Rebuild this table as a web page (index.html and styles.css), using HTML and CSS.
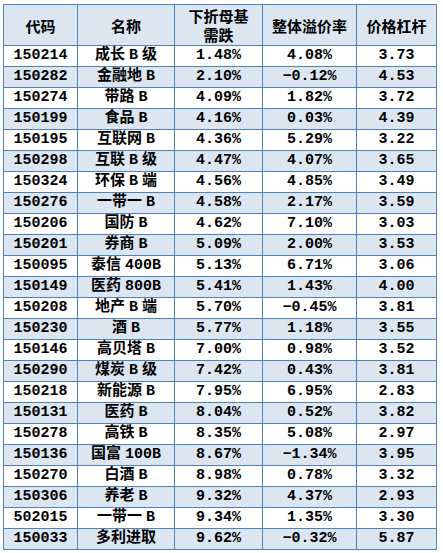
FILE: index.html
```html
<!DOCTYPE html>
<html lang="zh">
<head>
<meta charset="utf-8">
<title>分级B下折母基需跌幅度</title>
<link rel="stylesheet" href="styles.css">
</head>
<body>
<table class="grid">
  <colgroup>
    <col class="c-code"><col class="c-name"><col class="c-drop"><col class="c-prem"><col class="c-lev">
  </colgroup>
  <thead>
    <tr class="head">
      <th>代码</th>
      <th>名称</th>
      <th>下折母基<br>需跌</th>
      <th>整体溢价率</th>
      <th>价格杠杆</th>
    </tr>
  </thead>
  <tbody>
    <tr><td>150214</td><td>成长<span class="lat mid">B</span>级</td><td>1.48%</td><td>4.08%</td><td>3.73</td></tr>
    <tr><td>150282</td><td>金融地<span class="lat">B</span></td><td>2.10%</td><td>−0.12%</td><td>4.53</td></tr>
    <tr><td>150274</td><td>带路<span class="lat">B</span></td><td>4.09%</td><td>1.82%</td><td>3.72</td></tr>
    <tr><td>150199</td><td>食品<span class="lat">B</span></td><td>4.16%</td><td>0.03%</td><td>4.39</td></tr>
    <tr><td>150195</td><td>互联网<span class="lat">B</span></td><td>4.36%</td><td>5.29%</td><td>3.22</td></tr>
    <tr><td>150298</td><td>互联<span class="lat mid">B</span>级</td><td>4.47%</td><td>4.07%</td><td>3.65</td></tr>
    <tr><td>150324</td><td>环保<span class="lat mid">B</span>端</td><td>4.56%</td><td>4.85%</td><td>3.49</td></tr>
    <tr><td>150276</td><td>一带一<span class="lat">B</span></td><td>4.58%</td><td>2.17%</td><td>3.59</td></tr>
    <tr><td>150206</td><td>国防<span class="lat">B</span></td><td>4.62%</td><td>7.10%</td><td>3.03</td></tr>
    <tr><td>150201</td><td>券商<span class="lat">B</span></td><td>5.09%</td><td>2.00%</td><td>3.53</td></tr>
    <tr><td>150095</td><td>泰信<span class="lat">400B</span></td><td>5.13%</td><td>6.71%</td><td>3.06</td></tr>
    <tr><td>150149</td><td>医药<span class="lat">800B</span></td><td>5.41%</td><td>1.43%</td><td>4.00</td></tr>
    <tr><td>150208</td><td>地产<span class="lat mid">B</span>端</td><td>5.70%</td><td>−0.45%</td><td>3.81</td></tr>
    <tr><td>150230</td><td>酒<span class="lat">B</span></td><td>5.77%</td><td>1.18%</td><td>3.55</td></tr>
    <tr><td>150146</td><td>高贝塔<span class="lat">B</span></td><td>7.00%</td><td>0.98%</td><td>3.52</td></tr>
    <tr><td>150290</td><td>煤炭<span class="lat mid">B</span>级</td><td>7.42%</td><td>0.43%</td><td>3.81</td></tr>
    <tr><td>150218</td><td>新能源<span class="lat">B</span></td><td>7.95%</td><td>6.95%</td><td>2.83</td></tr>
    <tr><td>150131</td><td>医药<span class="lat">B</span></td><td>8.04%</td><td>0.52%</td><td>3.82</td></tr>
    <tr><td>150278</td><td>高铁<span class="lat">B</span></td><td>8.35%</td><td>5.08%</td><td>2.97</td></tr>
    <tr><td>150136</td><td>国富<span class="lat">100B</span></td><td>8.67%</td><td>−1.34%</td><td>3.95</td></tr>
    <tr><td>150270</td><td>白酒<span class="lat">B</span></td><td>8.98%</td><td>0.78%</td><td>3.32</td></tr>
    <tr><td>150306</td><td>养老<span class="lat">B</span></td><td>9.32%</td><td>4.37%</td><td>2.93</td></tr>
    <tr><td>502015</td><td>一带一<span class="lat">B</span></td><td>9.34%</td><td>1.35%</td><td>3.30</td></tr>
    <tr><td>150033</td><td>多利进取</td><td>9.62%</td><td>−0.32%</td><td>5.87</td></tr>
  </tbody>
</table>
</body>
</html>
```

FILE: styles.css
```css
html, body {
  margin: 0;
  padding: 0;
  background: #ffffff;
}

body {
  padding: 4px 0 0 3px;
}

.grid {
  border-collapse: collapse;
  table-layout: fixed;
  width: 433px;
  font-family: "Liberation Mono", "Noto Sans CJK SC", monospace;
  font-size: 15px;
  font-weight: bold;
  color: #000000;
}

.c-code { width: 74px; }
.c-name { width: 97px; }
.c-drop { width: 88px; }
.c-prem { width: 94px; }
.c-lev  { width: 80px; }

.grid th,
.grid td {
  border: 1px solid #4f81bd;
  padding: 0;
  text-align: center;
  vertical-align: middle;
  white-space: nowrap;
  overflow: hidden;
}

.grid th {
  font-family: "Noto Sans CJK SC", sans-serif;
  font-size: 15px;
  line-height: 19px;
  height: 40px;
  background: #dce6f1;
}

.grid td {
  height: 20px;
  line-height: 18px;
}

.grid tbody tr:nth-child(even) td {
  background: #dce6f1;
}

.lat {
  margin-left: 4px;
}

.lat.mid {
  margin-right: 4px;
}
```
